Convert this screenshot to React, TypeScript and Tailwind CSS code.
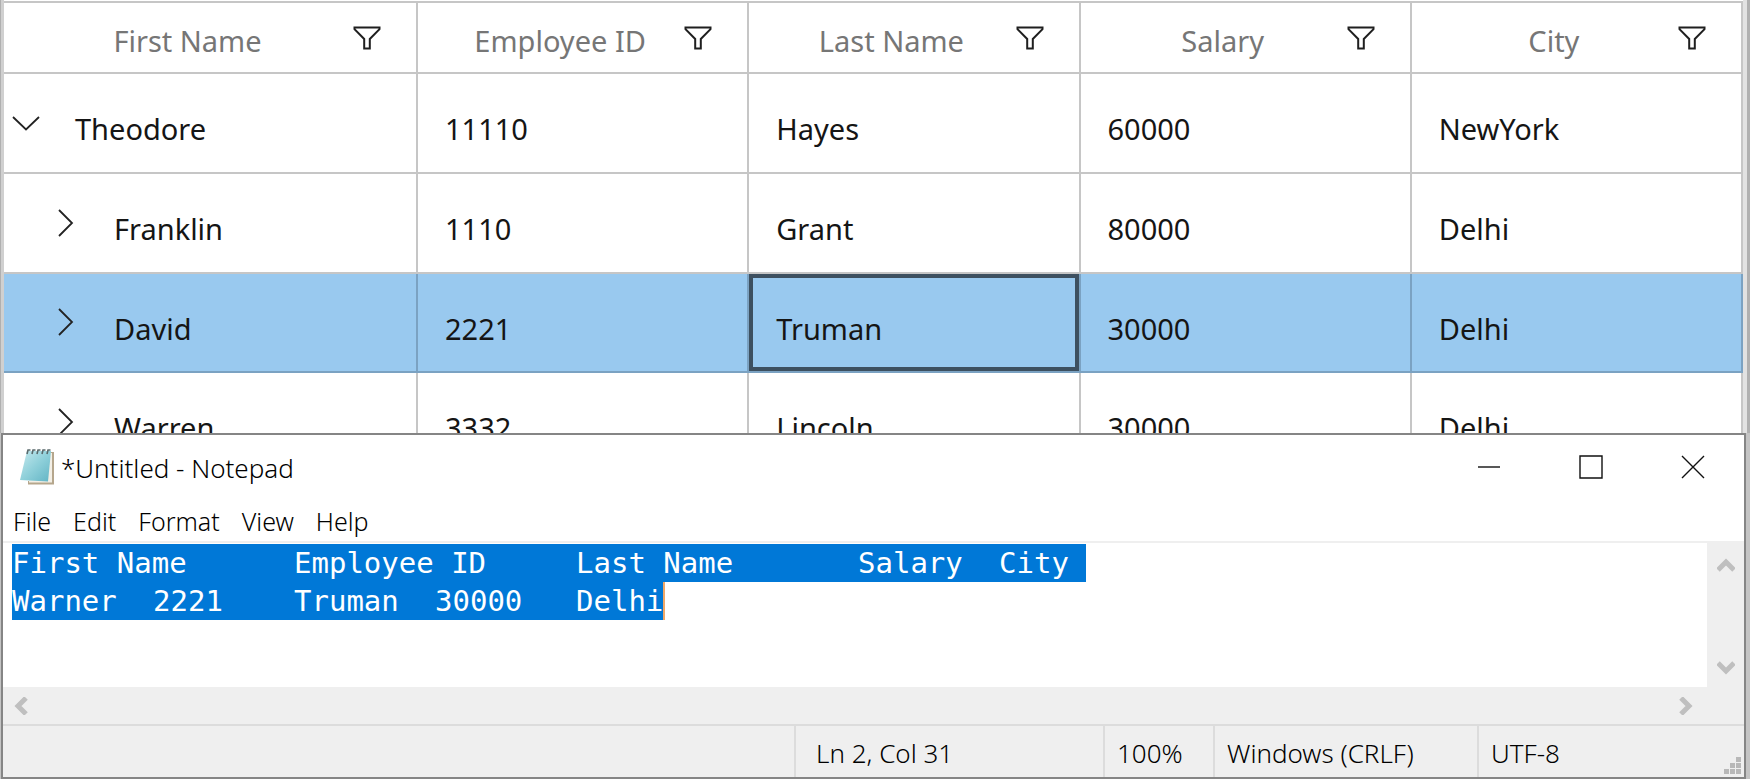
import { useEffect, useRef, type ReactNode } from "react";

type Row = {
  name: string;
  id: string;
  last: string;
  salary: string;
  city: string;
  level: number;
  selected?: boolean;
};

const columns = ["First Name", "Employee ID", "Last Name", "Salary", "City"];

const rows: Row[] = [
  { name: "Theodore", id: "11110", last: "Hayes", salary: "60000", city: "NewYork", level: 0 },
  { name: "Franklin", id: "1110", last: "Grant", salary: "80000", city: "Delhi", level: 1 },
  { name: "David", id: "2221", last: "Truman", salary: "30000", city: "Delhi", level: 1, selected: true },
  { name: "Warren", id: "3332", last: "Lincoln", salary: "30000", city: "Delhi", level: 1 },
];

const noteText =
  "First Name\tEmployee ID\tLast Name\tSalary\tCity\nWarner\t2221\tTruman\t30000\tDelhi";

function FilterIcon() {
  return (
    <svg width="28" height="24" viewBox="0 0 28 24" fill="none" stroke="#1f1f1f" strokeWidth="2">
      <path d="M1.5 1.5H26.5V3.2L16.8 13V22.5H11.2V13L1.5 3.2Z" />
    </svg>
  );
}

function Expander({ open }: { open: boolean }) {
  return (
    <svg width="28" height="28" viewBox="0 0 28 28" fill="none" stroke="#222" strokeWidth="1.8">
      <path d={open ? "M1 8L14 20.5L27 8" : "M8 1L21 14L8 27"} />
    </svg>
  );
}

function TreeGrid() {
  return (
    <div className="h-[433px] overflow-hidden border-r-[3px] border-l border-[#b0b0b0] bg-[#e2e2e2] pr-1">
      <div className="border-l-[3px] border-[#d0d0d0] bg-white pt-px">
        <table className="w-full table-fixed border-separate border-spacing-0 border-t-2 border-[#c6c6c6] text-[29px] leading-[40px]">
          <colgroup>
            <col className="w-[414px]" />
            <col />
            <col />
            <col />
            <col />
          </colgroup>
          <thead>
            <tr className="h-[71px]">
              {columns.map((c) => (
                <th key={c} scope="col" className="border-r-2 border-b-2 border-[#c6c6c6] p-0 font-normal text-[#767676]">
                  <div className="flex items-center pr-[35px] pt-[6px]">
                    <span className="flex-1 pl-[18px] text-center">{c}</span>
                    <button type="button" aria-label={`Filter ${c}`} className="-mt-[6px]">
                      <FilterIcon />
                    </button>
                  </div>
                </th>
              ))}
            </tr>
          </thead>
          <tbody>
            {rows.map((r) => {
              const cell = r.selected
                ? "border-r-2 border-b-2 border-[#7ba2c2] bg-[#99c9ef] p-0"
                : "border-r-2 border-b-2 border-[#c6c6c6] p-0";
              return (
                <tr key={r.name} className={r.selected ? "h-[99px] text-[#151515]" : "h-[100px] text-[#151515]"}>
                  <td className={cell}>
                    <div className={r.level ? "flex items-center gap-[35px] pt-3 pl-[47px]" : "flex items-center gap-[35px] pt-3 pl-[8px]"}>
                      <button type="button" aria-label={`Toggle ${r.name}`} className="-mt-[13px]">
                        <Expander open={r.level === 0} />
                      </button>
                      {r.name}
                    </div>
                  </td>
                  <td className={cell}><div className="pt-3 pl-[27px]">{r.id}</div></td>
                  <td className={cell}>
                    {r.selected ? (
                      <div className="flex h-[97px] items-center border-4 border-[#3d5060] pt-3 pl-[23px]">{r.last}</div>
                    ) : (
                      <div className="pt-3 pl-[27px]">{r.last}</div>
                    )}
                  </td>
                  <td className={cell}><div className="pt-3 pl-[27px]">{r.salary}</div></td>
                  <td className={cell}><div className="pt-3 pl-[27px]">{r.city}</div></td>
                </tr>
              );
            })}
          </tbody>
        </table>
      </div>
    </div>
  );
}

function NotepadIcon() {
  return (
    <svg width="36" height="38" viewBox="0 0 36 38">
      <defs>
        <linearGradient id="page" x1="0" y1="0" x2="1" y2="1">
          <stop offset="0" stopColor="#c6e9ee" />
          <stop offset="0.5" stopColor="#8fd0da" />
          <stop offset="1" stopColor="#62b4c4" />
        </linearGradient>
      </defs>
      <path d="M31 4H35V36.5H9V33H31Z" fill="#b5a68c" />
      <path d="M30 5H33V34.5H10V32Z" fill="#f3efe6" />
      <path d="M8 3H32L29 33.5L1 32Z" fill="url(#page)" />
      <path d="M8 6L9 2H11.5M13 6L14 2H16.5M18 6L19 2H21.5M23 6L24 2H26.5M28 6L29 2H31.5" fill="none" stroke="#5a6a6c" strokeWidth="1.6" />
    </svg>
  );
}

function Chevron({ d, label, w, h }: { d: string; label: string; w: number; h: number }) {
  return (
    <button type="button" aria-label={label}>
      <svg width={w} height={h} viewBox={`0 0 ${w} ${h}`} fill="none" stroke="#bfbfbf" strokeWidth="5">
        <path d={d} />
      </svg>
    </button>
  );
}

function WindowButton({ label, children }: { label: string; children: ReactNode }) {
  return (
    <button type="button" aria-label={label} className="flex h-full w-[102px] items-center justify-center">
      <svg width="24" height="24" viewBox="0 0 24 24" fill="none" stroke="#111" strokeWidth="1.4">
        {children}
      </svg>
    </button>
  );
}

function Notepad() {
  const box = useRef<HTMLTextAreaElement>(null);
  useEffect(() => {
    box.current?.focus();
    box.current?.select();
  }, []);
  return (
    <section className="mr-1 ml-px flex flex-col border-2 border-[#858585] bg-white text-[26px] font-light text-black">
      <header className="flex h-[64px] items-center pl-4">
        <NotepadIcon />
        <h1 className="flex-1 pt-[2px] pl-[6px]">*Untitled - Notepad</h1>
        <WindowButton label="Minimize"><path d="M1 12H23" /></WindowButton>
        <WindowButton label="Maximize"><path d="M1 1H23V23H1Z" /></WindowButton>
        <WindowButton label="Close"><path d="M1 1L23 23M23 1L1 23" /></WindowButton>
      </header>
      <nav className="flex h-[44px] items-center gap-[22px] border-b-2 border-[#efefef] pt-1 pl-[10px] text-[25px]">
        {["File", "Edit", "Format", "View", "Help"].map((m) => (
          <button key={m} type="button">{m}</button>
        ))}
      </nav>
      <div className="relative flex h-[144px]">
        <textarea
          ref={box}
          aria-label="Document text"
          defaultValue={noteText}
          spellCheck={false}
          wrap="off"
          className="block flex-1 resize-none overflow-hidden bg-white pt-px pl-[9px] font-['DejaVu_Sans_Mono',monospace] text-[29px] leading-[38px] font-normal [tab-size:141px] outline-none selection:bg-[#0078d7] selection:text-white"
        />
        <span className="absolute top-[39px] left-[660px] h-[38px] w-[2px] bg-[#f0a868]" />
        <div className="flex w-[37px] flex-col items-center justify-between bg-[#efefef] pt-[14px] pb-[11px]">
          <Chevron label="Scroll up" w={18} h={16} d="M1 13L9 5L17 13" />
          <Chevron label="Scroll down" w={18} h={16} d="M1 3L9 11L17 3" />
        </div>
      </div>
      <div className="flex h-[37px] items-center justify-between bg-[#efefef] pr-[50px] pl-[10px]">
        <Chevron label="Scroll left" w={16} h={18} d="M13 1L5 9L13 17" />
        <Chevron label="Scroll right" w={16} h={18} d="M3 1L11 9L3 17" />
      </div>
      <footer className="flex h-[53px] items-stretch border-t-2 border-[#dcdcdc] bg-[#efefef] leading-[54px]">
        <div className="flex-1" />
        <div className="w-[309px] border-l-2 border-[#dcdcdc] pl-5">Ln 2, Col 31</div>
        <div className="w-[110px] border-l-2 border-[#dcdcdc] pl-3">100%</div>
        <div className="w-[264px] border-l-2 border-[#dcdcdc] pl-3">Windows (CRLF)</div>
        <div className="flex w-[267px] justify-between border-l-2 border-[#dcdcdc] pl-3">
          UTF-8
          <svg className="self-end" width="20" height="20" viewBox="0 0 20 20" fill="#b8b8b8">
            <path d="M12 0h5v5h-5zM6 6h5v5H6zM12 6h5v5h-5zM0 12h5v5H0zM6 12h5v5H6zM12 12h5v5h-5z" />
          </svg>
        </div>
      </footer>
    </section>
  );
}

export default function App() {
  return (
    <main className="overflow-hidden bg-[#c4c4c4] font-['Noto_Sans','Open_Sans',sans-serif]">
      <TreeGrid />
      <Notepad />
    </main>
  );
}
